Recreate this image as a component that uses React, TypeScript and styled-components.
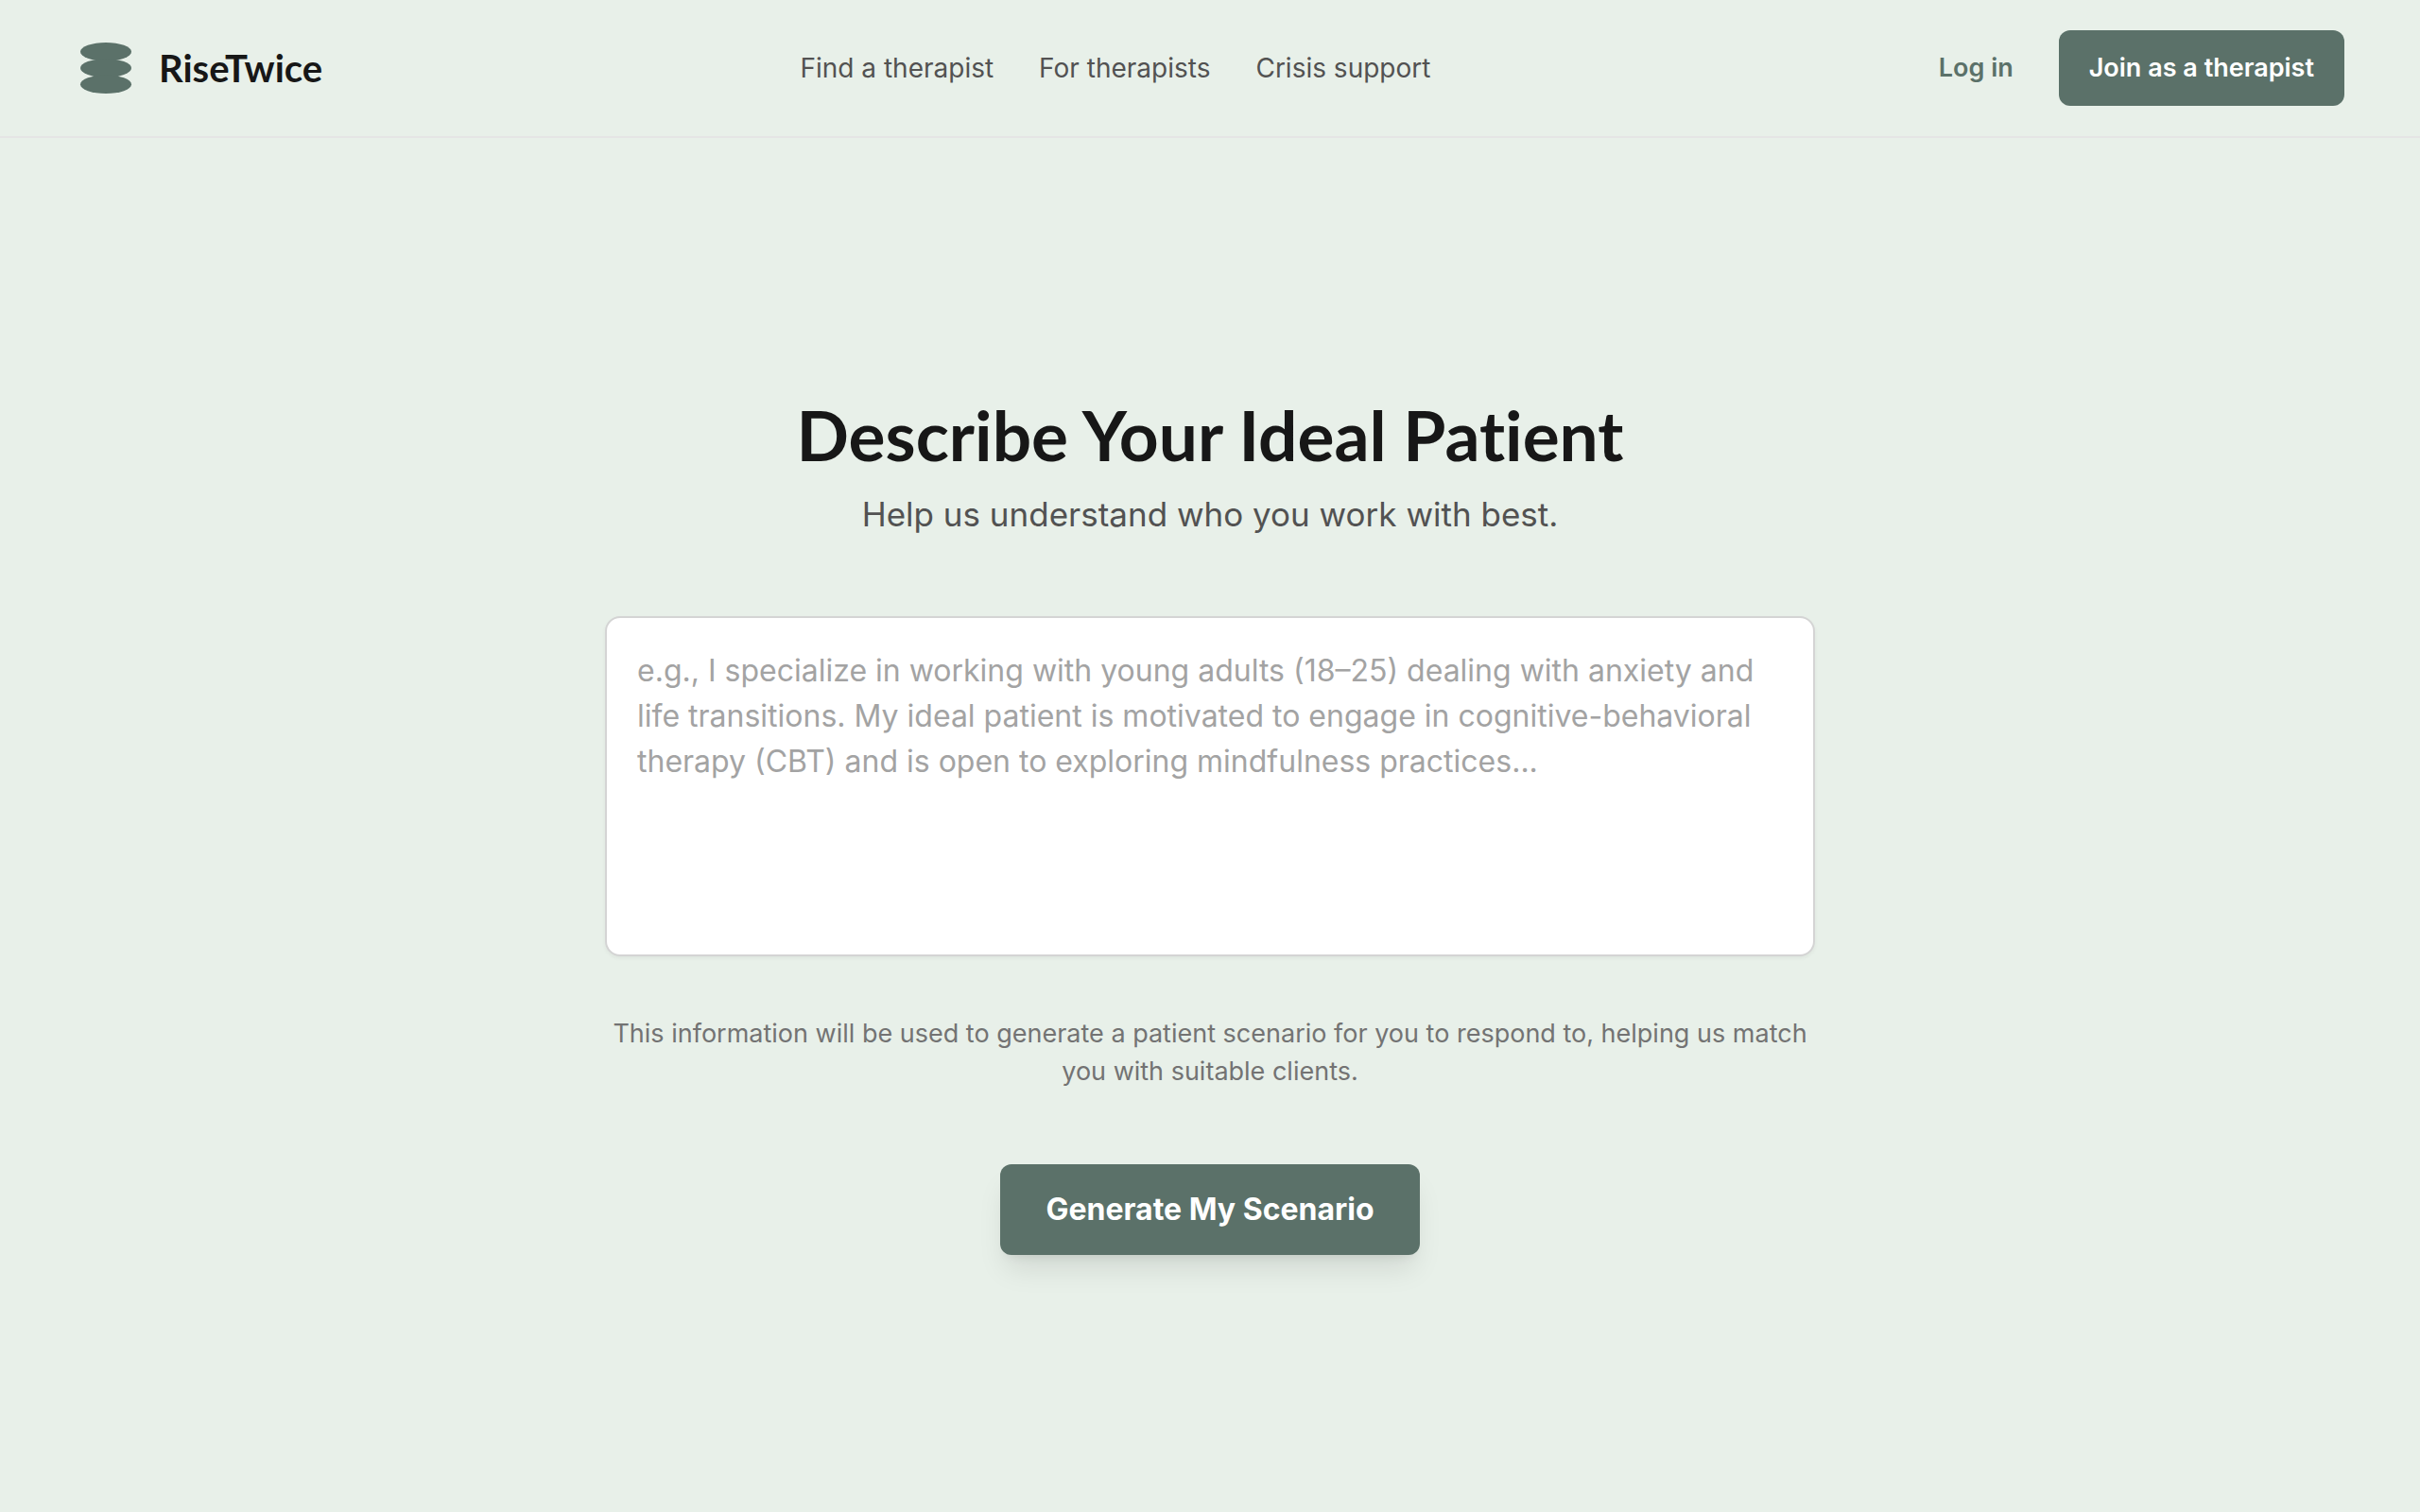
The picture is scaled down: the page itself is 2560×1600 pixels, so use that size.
import React from "react";
import styled, { createGlobalStyle } from "styled-components";

const sans = `Inter, "Open Sans", "Liberation Sans", sans-serif`;
const display = `Lato, Inter, "Liberation Sans", sans-serif`;
const green = "#5b7169";

const GlobalStyle = createGlobalStyle`
  *, *::before, *::after { box-sizing: border-box; }
  body {
    margin: 0;
    background: #e8f0e9;
    color: #171717;
    font-family: ${sans};
    -webkit-font-smoothing: antialiased;
  }
`;

const Page = styled.div`
  min-height: 100vh;
  display: flex;
  flex-direction: column;
`;

const Header = styled.header`
  display: flex;
  align-items: center;
  justify-content: space-between;
  padding: 32px 80px;
  border-bottom: 2px solid #e5e5e5;
`;

const Brand = styled.a`
  display: flex;
  align-items: center;
  gap: 24px;
  color: #171717;
  font-family: ${display};
  font-size: 40px;
  font-weight: 700;
  line-height: 56px;
  text-decoration: none;
`;

const LogoMark = styled.svg`
  width: 64px;
  height: 64px;
  fill: ${green};
`;

const Nav = styled.nav`
  display: flex;
  gap: 48px;
`;

const NavLink = styled.a`
  color: #525252;
  font-size: 28px;
  line-height: 40px;
  text-decoration: none;
`;

const Actions = styled.div`
  display: flex;
  align-items: center;
  gap: 16px;
`;

const Button = styled.button<{ $variant?: "solid" | "ghost"; $large?: boolean }>`
  padding: ${(p) => (p.$large ? "28px 48px" : "20px 32px")};
  border: 0;
  border-radius: 12px;
  background: ${(p) => (p.$variant === "ghost" ? "transparent" : green)};
  color: ${(p) => (p.$variant === "ghost" ? green : "#fff")};
  font-family: inherit;
  font-size: ${(p) => (p.$large ? "32px" : "27px")};
  font-weight: ${(p) => (p.$large ? 700 : 600)};
  line-height: 40px;
  cursor: pointer;
  box-shadow: ${(p) =>
    p.$large
      ? "0 20px 30px -6px rgba(0, 0, 0, 0.1), 0 8px 12px -8px rgba(0, 0, 0, 0.1)"
      : "none"};
`;

const Main = styled.main`
  flex: 1;
  display: flex;
  align-items: center;
  justify-content: center;
  padding: 48px 32px;
`;

const Form = styled.form`
  width: 100%;
  max-width: 1280px;
  display: flex;
  flex-direction: column;
  align-items: center;
  text-align: center;
`;

const Title = styled.h1`
  margin: 0 0 14px;
  font-family: ${display};
  font-size: 73px;
  font-weight: 700;
  font-variant-ligatures: none;
  line-height: 84px;
`;

const Subtitle = styled.label`
  margin-bottom: 80px;
  color: #525252;
  font-size: 35px;
  line-height: 56px;
`;

const Description = styled.textarea`
  display: block;
  width: 100%;
  height: 360px;
  margin-bottom: 62px;
  padding: 32px;
  border: 2px solid #d4d4d4;
  border-radius: 16px;
  background: #fff;
  color: #171717;
  font-family: inherit;
  font-size: 32px;
  line-height: 48px;
  resize: none;
  box-shadow: 0 2px 4px rgba(0, 0, 0, 0.05);

  &::placeholder {
    color: #a3a3a3;
    opacity: 1;
  }
`;

const Hint = styled.p`
  margin: 0 0 78px;
  color: #737373;
  font-size: 27px;
  line-height: 40px;
`;

const navItems = ["Find a therapist", "For therapists", "Crisis support"];

export default function App() {
  return (
    <Page>
      <GlobalStyle />
      <Header>
        <Brand href="#">
          <LogoMark viewBox="0 0 64 64" aria-hidden="true">
            <ellipse cx="32" cy="14.8" rx="27" ry="9.8" />
            <ellipse cx="32" cy="32" rx="27" ry="9.8" />
            <ellipse cx="32" cy="49.2" rx="27" ry="9.8" />
          </LogoMark>
          RiseTwice
        </Brand>
        <Nav>
          {navItems.map((item) => (
            <NavLink key={item} href="#">
              {item}
            </NavLink>
          ))}
        </Nav>
        <Actions>
          <Button type="button" $variant="ghost">
            Log in
          </Button>
          <Button type="button">Join as a therapist</Button>
        </Actions>
      </Header>
      <Main>
        <Form onSubmit={(e) => e.preventDefault()}>
          <Title>Describe Your Ideal Patient</Title>
          <Subtitle htmlFor="description">Help us understand who you work with best.</Subtitle>
          <Description
            id="description"
            placeholder="e.g., I specialize in working with young adults (18–25) dealing with anxiety and life transitions. My ideal patient is motivated to engage in cognitive-behavioral therapy (CBT) and is open to exploring mindfulness practices..."
          />
          <Hint>
            This information will be used to generate a patient scenario for you to respond to,
            helping us match you with suitable clients.
          </Hint>
          <Button type="submit" $large>
            Generate My Scenario
          </Button>
        </Form>
      </Main>
    </Page>
  );
}
